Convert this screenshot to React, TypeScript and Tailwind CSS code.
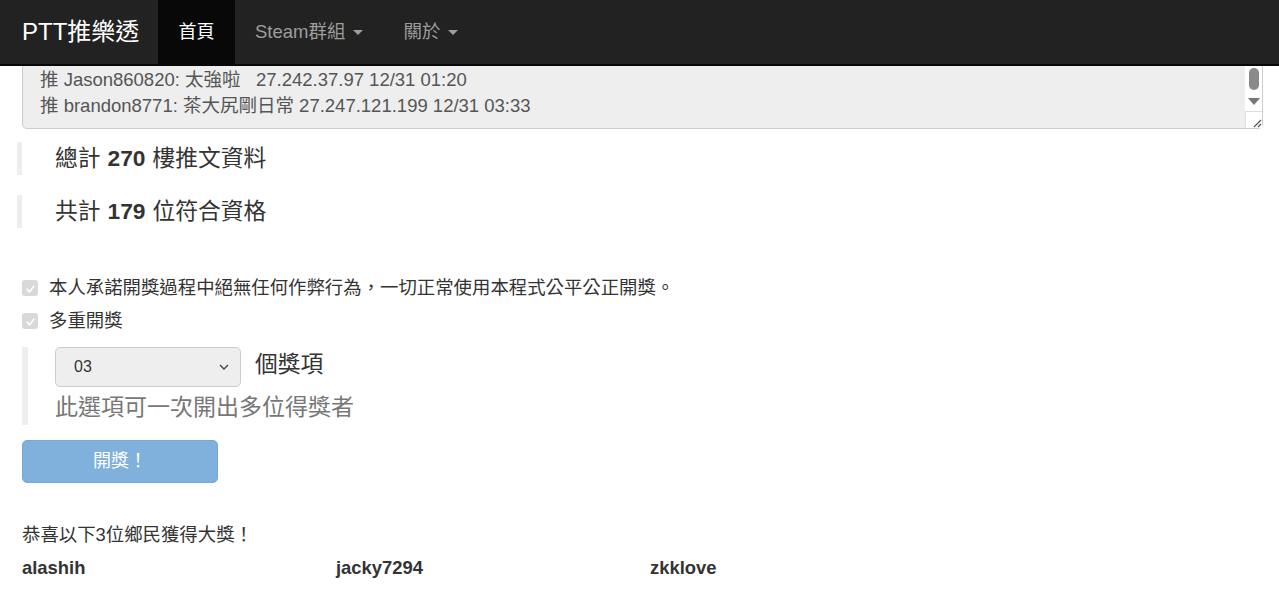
import React from "react";

const font = { fontFamily: '"Liberation Sans", Arial, "Noto Sans CJK TC", sans-serif' };

function Caret() {
  return (
    <span className="inline-block ml-[8px] align-middle w-0 h-0 border-l-[5px] border-r-[5px] border-t-[5px] border-l-transparent border-r-transparent border-t-current" />
  );
}

function Check() {
  return (
    <span className="w-[16px] h-[16px] rounded-[3px] bg-[#d9d9d9] flex items-center justify-center">
      <svg width="11" height="11" viewBox="0 0 12 12">
        <path d="M2 6.5 L5 9.5 L10 3" fill="none" stroke="#fff" strokeWidth="1.8" />
      </svg>
    </span>
  );
}

export default function App() {
  return (
    <div className="w-[1279px] h-[594px] overflow-hidden bg-white text-[#333]" style={font}>
      {/* Navbar */}
      <nav className="h-[66px] bg-[#222] border-b-2 border-[#080808] flex items-stretch">
        <div className="w-[158px] pl-[22px] flex items-center text-[24px] text-white">PTT推樂透</div>
        <div className="w-[77px] bg-[#080808] flex items-center justify-center text-[18px] text-white">首頁</div>
        <div className="pl-[20px] pr-[20px] flex items-center text-[18.5px] text-[#9d9d9d]">
          Steam群組
          <Caret />
        </div>
        <div className="pl-[20px] pr-[20px] flex items-center text-[18.5px] text-[#9d9d9d]">
          關於
          <Caret />
        </div>
      </nav>

      <div className="px-[22px] pr-[16px]">
        {/* Textarea (scrolled) */}
        <div className="relative h-[63px] bg-[#eee] border border-t-0 border-[#ccc] rounded-b-[5px] text-[18.5px] leading-[26px] text-[#555] pl-[17px] pt-[1px]">
          <div>推 Jason860820: 太強啦&nbsp;&nbsp; 27.242.37.97 12/31 01:20</div>
          <div>推 brandon8771: 茶大尻剛日常 27.247.121.199 12/31 03:33</div>
          <div className="absolute right-0 top-0 w-[17px] h-full bg-white flex flex-col items-center">
            <div className="mt-[2px] w-[10px] h-[22px] rounded-full bg-[#8a8a8a]" />
            <div className="mt-[8px] w-0 h-0 border-l-[6px] border-r-[6px] border-t-[7px] border-l-transparent border-r-transparent border-t-[#777]" />
            <div className="absolute bottom-0 right-0 w-[17px] h-[17px] bg-white border-l border-t border-[#ddd] flex items-end justify-end">
              <svg width="12" height="12" viewBox="0 0 12 12">
                <line x1="4" y1="11" x2="11" y2="4" stroke="#555" strokeWidth="1.2" />
                <line x1="8" y1="11" x2="11" y2="8" stroke="#555" strokeWidth="1.2" />
              </svg>
            </div>
          </div>
        </div>
      </div>

      {/* Blockquotes */}
      <div className="mt-[13px] ml-[17px] border-l-[5px] border-[#eee] h-[33px] flex items-center pl-[33px] text-[22.75px] leading-[30px] pb-[2px]">
        總計 <b className="mx-[7px]">270</b> 樓推文資料
      </div>
      <div className="mt-[20px] ml-[17px] border-l-[5px] border-[#eee] h-[33px] flex items-center pl-[33px] text-[22.75px] leading-[30px] pb-[2px]">
        共計 <b className="mx-[7px]">179</b> 位符合資格
      </div>

      {/* Checkboxes */}
      <div className="mt-[51px] pl-[22px] flex items-center h-[18px] text-[18.4px]">
        <Check />
        <span className="ml-[11px]">本人承諾開獎過程中絕無任何作弊行為，一切正常使用本程式公平公正開獎。</span>
      </div>
      <div className="mt-[15px] pl-[22px] flex items-center h-[18px] text-[18.4px]">
        <Check />
        <span className="ml-[11px]">多重開獎</span>
      </div>

      {/* Multi select blockquote */}
      <div className="mt-[17px] ml-[22px] border-l-[6px] border-[#eee] h-[78px] pl-[27px]">
        <div className="flex items-center">
          <div className="w-[186px] h-[40px] bg-[#eee] border border-[#ccc] rounded-[5px] flex items-center justify-between pl-[18px] pr-[10px] text-[16px] text-[#333]">
            <span>03</span>
            <svg width="12" height="8" viewBox="0 0 12 8">
              <path d="M2 2 L6 6 L10 2" fill="none" stroke="#444" strokeWidth="1.4" />
            </svg>
          </div>
          <span className="ml-[14px] text-[22.75px] -mt-[6px]">個獎項</span>
        </div>
        <div className="text-[23px] text-[#777] leading-[30px] mt-[5px]">此選項可一次開出多位得獎者</div>
      </div>

      {/* Button */}
      <div className="mt-[15px] ml-[22px] w-[196px] h-[43px] rounded-[5px] bg-[#80b1dc] border border-[#76a8d4] flex items-center justify-center text-[18px] text-white">
        開獎！
      </div>

      <div className="mt-[42px] pl-[22px] text-[18.4px] leading-[20px]">恭喜以下3位鄉民獲得大獎！</div>
      <div className="mt-[13px] pl-[22px] grid grid-cols-[314px_314px_314px] text-[18.4px] font-bold leading-[20px]">
        <div>alashih</div>
        <div>jacky7294</div>
        <div>zkklove</div>
      </div>
    </div>
  );
}
